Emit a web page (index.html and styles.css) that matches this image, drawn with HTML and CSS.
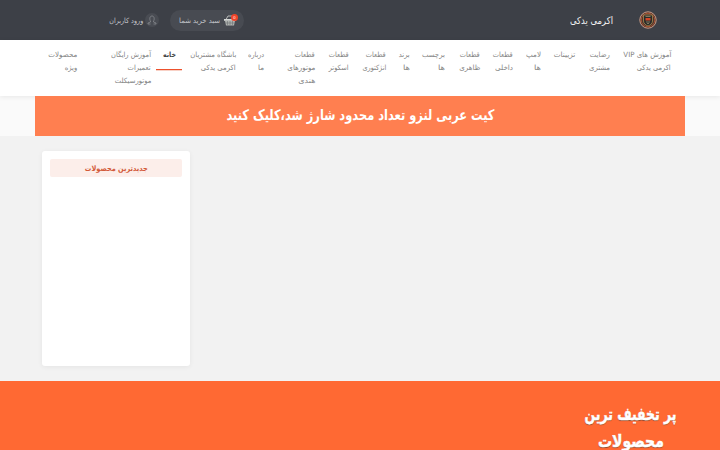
FILE: index.html
```
<!DOCTYPE html>
<html lang="fa" dir="rtl">
<head>
<meta charset="utf-8">
<title>اکرمی یدکی</title>
<link rel="stylesheet" href="styles.css">
</head>
<body>
<header class="topbar">
  <svg class="logo" viewBox="0 0 18 18">
    <circle cx="9" cy="9" r="8.2" fill="#493630" stroke="#c99b87" stroke-width="1"/>
    <circle cx="9" cy="9" r="6.8" fill="none" stroke="#a9512f" stroke-width="1"/>
    <path d="M4.500 4h9v6c0 2.500-2 4-4.500 5-2.500-1-4.500-2.500-4.500-5z" fill="#292c2a" stroke="#a98a50" stroke-width=".8"/>
    <path d="M6.500 7h5v2.500h-5z" fill="#d34627"/>
    <path d="M6.500 5.500h5M7 11h4M8 12.500h2" stroke="#a69a75" stroke-width=".7"/>
  </svg>
  <h1 class="brand"><span data-fit="43">اکرمی یدکی</span></h1>
  <a class="cart">
    <span class="basket">
      <svg viewBox="0 0 12 11"><path d="M2 4.500 4 1h4l2 3.500" fill="none" stroke="#b9bbb9" stroke-width="1"/><path d="M0 4h12v1.800H0z" fill="#d5d7d5"/><path d="M1 6h10l-1 4.500H2z" fill="#aeb2af"/><path d="M3.500 6v4M6 6v4M8.500 6v4M1.500 8h9" stroke="#63676b" stroke-width=".5"/></svg>
      <b class="badge">0</b>
    </span>
    <span data-fit="41">سبد خرید شما</span>
  </a>
  <a class="login">
    <span class="avatar"><svg viewBox="0 0 10 10"><path d="M1 9V8l2.500-1V6C2.500 5 2.300 1 5 1s2.500 4 1.500 5v1L9 8v1H6.500M1 9h2.500" fill="none" stroke="#85888d" stroke-width=".8"/></svg></span>
    <span data-fit="34">ورود کاربران</span>
  </a>
</header>
<nav class="menu">
  <a><span data-fit="48">آموزش های VIP</span><span data-fit="34">اکرمی یدکی</span></a>
  <a><span data-fit="20">رضایت</span><span data-fit="21">مشتری</span></a>
  <a><span data-fit="21.500">تزیینات</span></a>
  <a><span data-fit="15">لامپ</span><span data-fit="7">ها</span></a>
  <a><span data-fit="20">قطعات</span><span data-fit="18">داخلی</span></a>
  <a><span data-fit="20">قطعات</span><span data-fit="21">ظاهری</span></a>
  <a><span data-fit="23">برچسب</span><span data-fit="7">ها</span></a>
  <a><span data-fit="11">برند</span><span data-fit="7">ها</span></a>
  <a><span data-fit="20">قطعات</span><span data-fit="24">انژکتوری</span></a>
  <a><span data-fit="20">قطعات</span><span data-fit="20">اسکوتر</span></a>
  <a><span data-fit="20">قطعات</span><span data-fit="28">موتورهای</span><span data-fit="17">هندی</span></a>
  <a><span data-fit="16">درباره</span><span data-fit="6">ما</span></a>
  <a><span data-fit="46">باشگاه مشتریان</span><span data-fit="35">اکرمی یدکی</span></a>
  <a class="active"><span data-fit="13">خانه</span></a>
  <a><span data-fit="40">آموزش رایگان</span><span data-fit="23">تعمیرات</span><span data-fit="36.500">موتورسیکلت</span></a>
  <a><span data-fit="29">محصولات</span><span data-fit="12.500">ویژه</span></a>
</nav>
<div class="notice"><a class="banner"><span data-fit="268">کیت عربی لنزو تعداد محدود شارژ شد،کلیک کنید</span></a></div>
<main class="content">
  <aside class="card"><h2><span data-fit="63">جدیدترین محصولات</span></h2></aside>
</main>
<section class="offers">
  <h2><span data-fit="92">پر تخفیف ترین</span><span data-fit="66">محصولات</span></h2>
</section>
<script src="fit.js"></script>
</body>
</html>
```
FILE: styles.css
```
* { box-sizing: border-box; }
body { margin: 0; height: 450px; overflow: hidden; background: #f2f2f2; font-family: "DejaVu Sans", sans-serif; font-size: 7.2px; }
h1, h2 { margin: 0; }
[data-fit] { display: block; width: max-content; flex: none; white-space: nowrap; transform-origin: right center; }
.topbar { height: 40px; display: flex; align-items: center; padding: 0 63px 0 0; background: #3d4047; color: #c3c5c9; }
.logo { width: 18px; height: 18px; flex: none; }
.brand { width: 43px; margin-right: 26px; font-size: 10px; font-weight: 400; color: #f1f2f3; }
.cart { display: flex; align-items: center; flex: none; width: 74px; height: 21px; margin-right: 326px; padding-right: 8px; border-radius: 11px; background: #484b52; }
.basket { position: relative; flex: none; width: 12px; height: 11px; margin-left: 4px; }
.basket svg { display: block; width: 12px; height: 11px; }
.badge { position: absolute; top: -1px; left: 7px; width: 7px; height: 7px; border-radius: 50%; background: #f04429; color: #ffb0a0; font-size: 4px; line-height: 7px; text-align: center; }
.login { display: flex; align-items: center; margin-right: 11px; }
.avatar { display: grid; flex: none; place-items: center; width: 14px; height: 14px; margin-left: 2px; border-radius: 50%; background: #494c53; }
.avatar svg { width: 10px; height: 10px; }
.menu { position: relative; display: grid; grid-template-columns: 61px 35px 34px 28px 33px 35px 35px 24px 37px 34px 51px 28px 60px 25px 73.500px 60px; height: 56px; padding: 8px 49px 0 0; background: #fff; color: #848484; line-height: 13px; box-shadow: 0 1px 5px rgba(0,0,0,.08); }
.menu .active { height: 22px; width: 26px; margin-right: -6px; padding-right: 6px; box-shadow: 0 .5px 0 #f0a28d, inset 0 -1px #ed512d; color: #444; font-weight: 700; }
.notice { height: 40px; padding: 0 35px; background: #fafafa; }
.banner { position: relative; display: flex; justify-content: center; align-items: center; height: 40px; padding-bottom: 2px; background: #ff7f50; color: #fff; font-size: 14.500px; font-weight: 700; }
.content { display: flex; justify-content: flex-end; height: 245px; padding: 15px 0 0 42px; }
.card { width: 148px; height: 215px; padding: 8px; border-radius: 3px; background: #fff; box-shadow: 0 1px 5px rgba(0,0,0,.06); }
.card h2 { display: flex; justify-content: center; align-items: center; height: 18px; border-radius: 2px; background: #fceeea; color: #d35b3a; font-size: 7.500px; }
.offers { height: 69px; padding: 20px 43px 0 0; background: #ff6933; color: #fff; }
.offers h2 { display: flex; flex-direction: column; align-items: center; width: 93px; font-size: 17px; line-height: 27px; -webkit-text-stroke: .5px #fff; text-shadow: 0 1px 1px #8b492c; }
```
FILE: fit.js
```
document.querySelectorAll('[data-fit]').forEach((el) => {
  const target = Number(el.dataset.fit);
  const natural = el.getBoundingClientRect().width;
  el.style.transform = `scaleX(${target / natural})`;
  el.style.marginLeft = `${target - natural}px`;
});
```
